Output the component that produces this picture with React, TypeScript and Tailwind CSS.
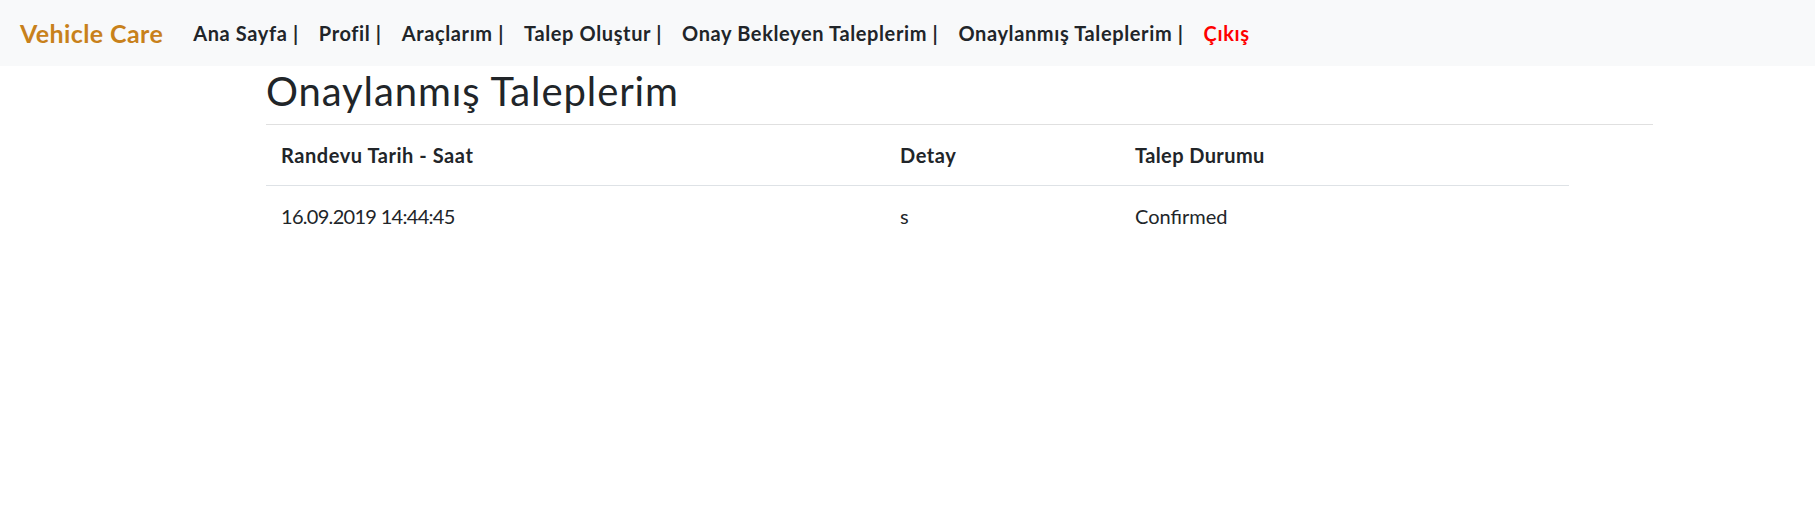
import React from "react";

const links = [
  "Ana Sayfa |",
  "Profil |",
  "Araçlarım |",
  "Talep Oluştur |",
  "Onay Bekleyen Taleplerim |",
  "Onaylanmış Taleplerim |",
];

export default function App() {
  return (
    <div className="min-h-[527px] bg-white text-[#212529]" style={{ fontFamily: "Lato, 'Noto Sans', sans-serif" }}>
      <nav className="flex h-[66px] items-center bg-[#f8f9fa] px-[20px]">
        <span className="mr-[20px] text-[25px] font-bold leading-[37px] tracking-[0.4px] text-[#c8811b]">Vehicle Care</span>
        <ul className="flex items-center">
          {links.map((l) => (
            <li key={l} className="px-[10px] text-[20px] font-bold leading-[30px] tracking-[0.62px] text-[#212529]">
              {l}
            </li>
          ))}
          <li className="px-[10px] text-[20px] font-bold leading-[30px] tracking-[0.62px] text-[#ff0000]">Çıkış</li>
        </ul>
      </nav>
      <main className="pl-[266px]">
        <h2 className="mb-[10px] mt-[2px] text-[40px] font-normal leading-[46px] tracking-[0.9px]">Onaylanmış Taleplerim</h2>
        <div className="h-px w-[1387px] bg-[#e0e0e0]" />
        <table className="w-[1303px] border-collapse text-[20px] leading-[30px]">
          <thead>
            <tr className="border-b border-[#dee2e6]">
              <th className="w-[619px] px-[15px] py-[15px] text-left font-bold tracking-[0.55px]">Randevu Tarih - Saat</th>
              <th className="w-[235px] px-[15px] py-[15px] text-left font-bold tracking-[0.55px]">Detay</th>
              <th className="px-[15px] py-[15px] text-left font-bold tracking-[0.4px]">Talep Durumu</th>
            </tr>
          </thead>
          <tbody>
            <tr>
              <td className="px-[15px] py-[15px] tracking-[-0.7px]">16.09.2019 14:44:45</td>
              <td className="px-[15px] py-[15px]">s</td>
              <td className="px-[15px] py-[15px]">Confirmed</td>
            </tr>
          </tbody>
        </table>
      </main>
    </div>
  );
}
